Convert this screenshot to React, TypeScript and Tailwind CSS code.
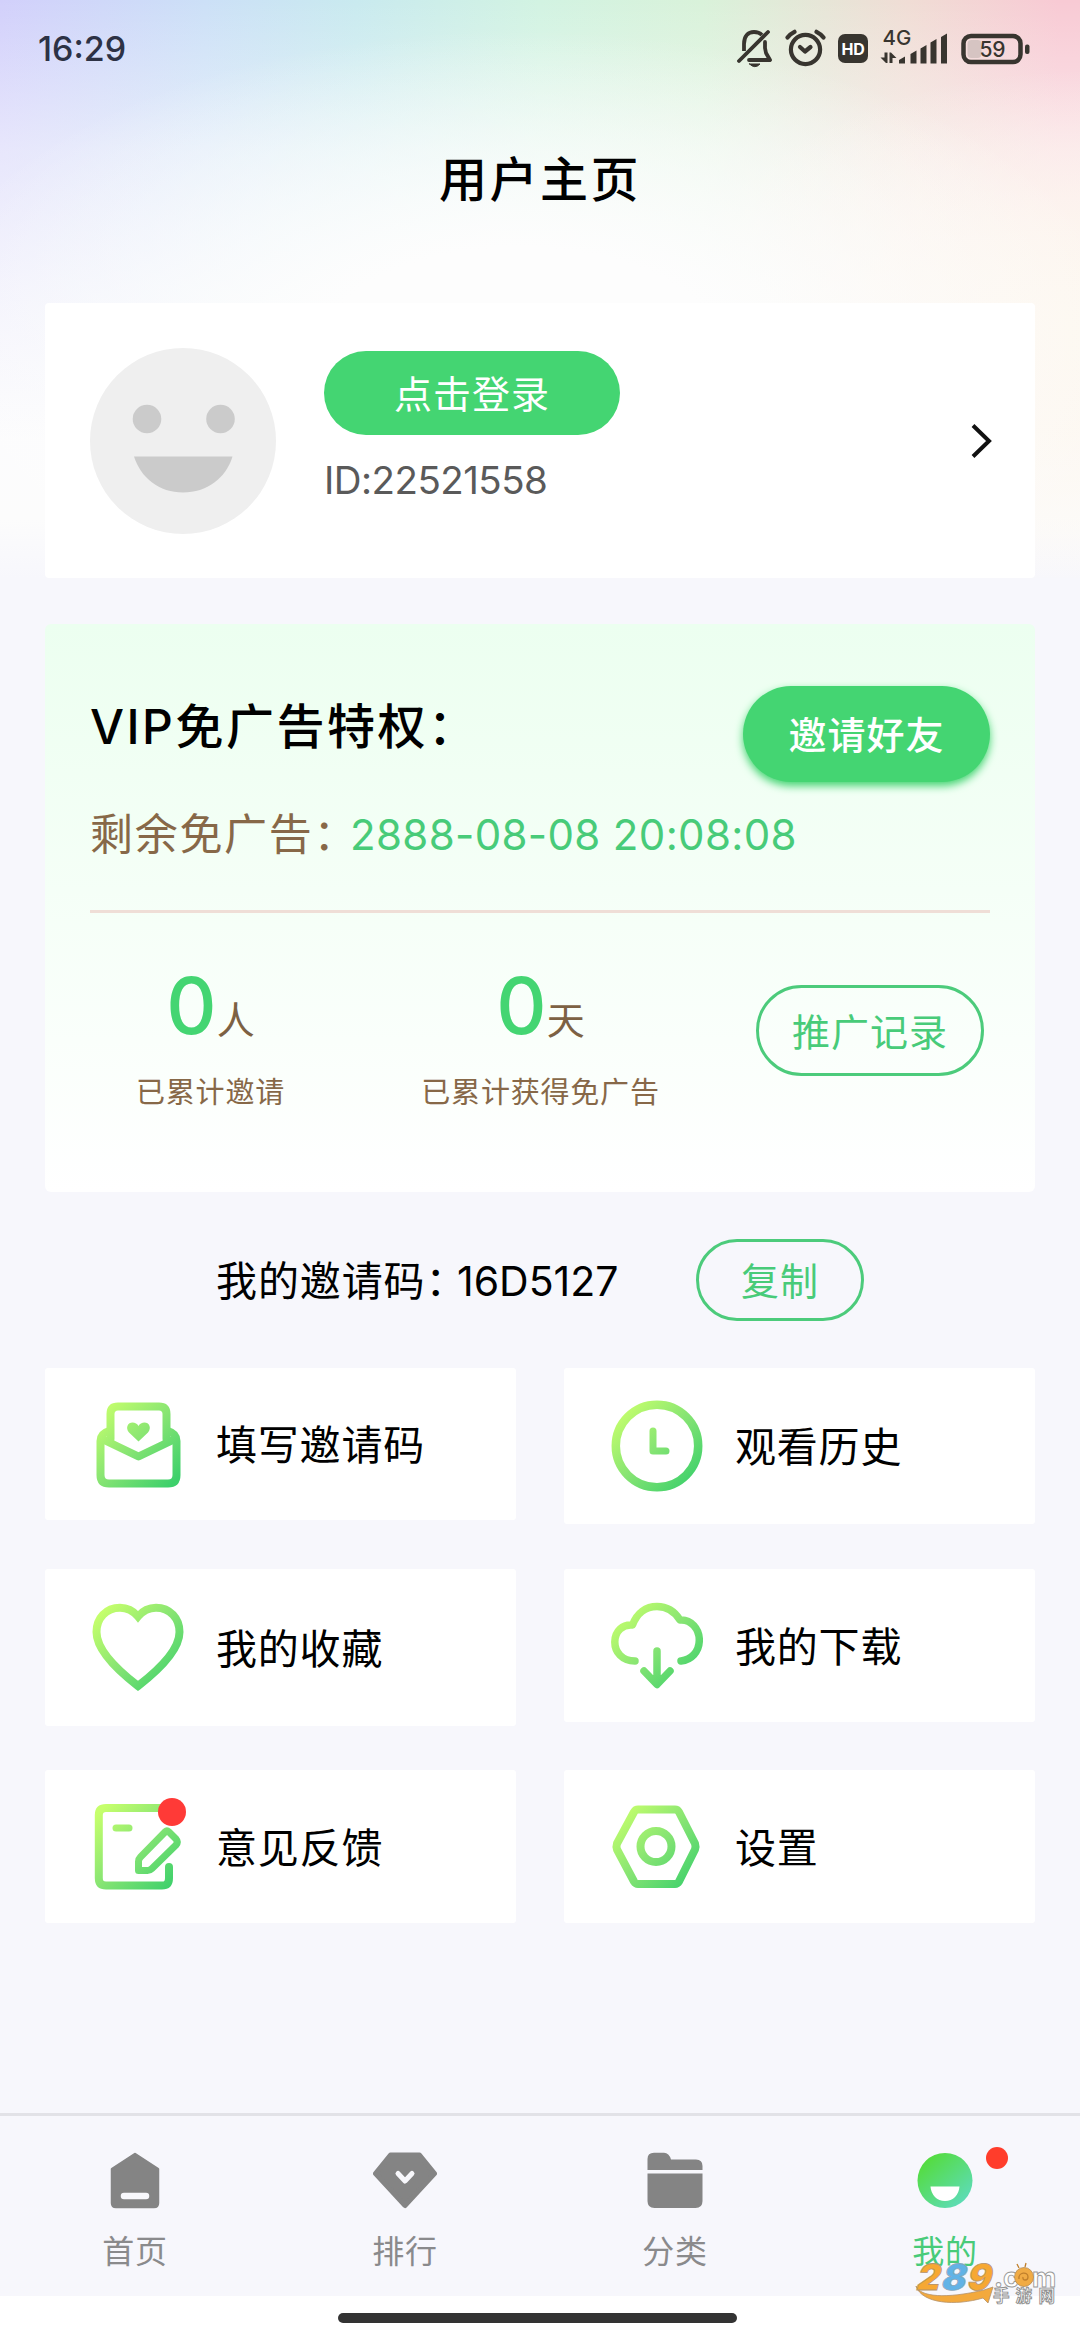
import React from "react";

const INK = "#38352f";

function StatusIcons() {
  return (
    <div className="flex h-[40px] items-start">
      <svg width="36" height="40" viewBox="0 0 36 40" fill="none" stroke={INK} strokeWidth="3.8" strokeLinecap="round">
        <path d="M2 32 L31 3" />
        <path d="M7 22 V15 C7 7 11 3 17 3 C20 3 23 4 25 6" strokeLinecap="butt" />
        <path d="M28 13 V19 L29 24 L33 31 H12" strokeLinejoin="round" />
        <path d="M12.5 35 H23 Q18 40.500 12.5 35 Z" fill={INK} stroke={INK} strokeWidth="1" />
      </svg>
      <svg className="ml-[12px]" width="42" height="40" viewBox="0 0 42 40" fill="none" stroke={INK} strokeWidth="4.2" strokeLinecap="round" strokeLinejoin="round">
        <circle cx="20.5" cy="20.5" r="14.6" />
        <path d="M15 18 L20 22.5 L25.5 18" />
        <path d="M2.5 8.5 Q5 5 9.5 2.8 M38.5 8.5 Q36 5 31.5 2.8" />
      </svg>
      <div className="mt-[5px] ml-[11px] flex h-[29px] w-[30px] items-center justify-center rounded-[7px] bg-[#38352f] text-[16px] leading-none font-bold tracking-[-0.300px] text-white">
        HD
      </div>
      <svg className="-mt-[10px] ml-[12px]" width="68" height="50" viewBox="0 -10 68 50" fill={INK}>
        <text x="2.5" y="15.500" fontSize="20.500" fontFamily="Inter" fontWeight="500">4G</text>
        <path d="M19 34.5 V31 L25 27.5 V34.5 Z M30.500 34.500 V25 L36.500 21.500 V34.500 Z M40.500 34.500 V19.500 L46.500 16 V34.500 Z M50.500 34.500 V13.500 L56.500 10 V34.500 Z M61 34.500 V8 L67 4.500 V34.500 Z" />
        <path d="M4.500 23.500 H7.500 V34 H6 L0.500 28.500 H4.500 Z M9.500 34 V23.500 H11 L16.500 29 H12.500 V34 Z" />
      </svg>
      <svg className="ml-[13px]" width="70" height="40" viewBox="0 0 70 40" fill="none">
        <rect x="2.500" y="7" width="57" height="26" rx="7.500" stroke={INK} strokeWidth="4.500" />
        <rect x="6.500" y="11" width="14" height="18" rx="4" fill="#d6c4c2" />
        <text x="31.500" y="27.800" fontSize="21" fontFamily="Inter" fontWeight="500" fill={INK} textAnchor="middle">59</text>
        <rect x="64" y="15.500" width="4.500" height="9.500" rx="2" fill={INK} />
      </svg>
    </div>
  );
}

function GradientIcon({ id, children }: { id: string; children: React.ReactNode }) {
  return (
    <svg width="92" height="92" viewBox="0 0 92 92" fill="none" stroke={`url(#${id})`} strokeWidth="8" strokeLinecap="round" strokeLinejoin="round" className="shrink-0">
      <defs>
        <linearGradient id={id} gradientUnits="userSpaceOnUse" x1="8" y1="10" x2="82" y2="84">
          <stop offset="0" stopColor="#c6ff6c" />
          <stop offset="0.500" stopColor="#86e473" />
          <stop offset="1" stopColor="#3dd06b" />
        </linearGradient>
      </defs>
      {children}
    </svg>
  );
}

const menu = [
  {
    label: "填写邀请码", height: "h-[152px]",
    icon: (
      <GradientIcon id="g-invite">
        <path d="M18.500 41 V16 Q18.500 8.500 26 8.500 H67 Q74.500 8.500 74.500 16 V41" />
        <path d="M17 33 Q8.500 35.500 8.500 43 V77 Q8.500 85.500 17 85.500 H76 Q84.500 85.500 84.500 77 V43 Q84.500 35.500 76 33" />
        <path d="M10 41 L46.500 58.500 L83 41" />
        <path d="M46.500 43.500 L37 34.500 C33 29.500 36 24.500 40.500 24.500 C43 24.500 45.500 26 46.500 28 C47.500 26 50 24.500 52.500 24.500 C57 24.500 60 29.500 56 34.500 Z" fill="url(#g-invite)" stroke="none" />
      </GradientIcon>
    ),
  },
  {
    label: "观看历史", height: "h-[156px]",
    icon: (
      <GradientIcon id="g-clock">
        <circle cx="46" cy="46" r="41.200" strokeWidth="8.500" />
        <path d="M42 31 V51 H55" strokeWidth="7" />
      </GradientIcon>
    ),
  },
  {
    label: "我的收藏", height: "h-[157px]",
    icon: (
      <GradientIcon id="g-heart">
        <path d="M46 14.500 C40 7.500 34 5.800 28 5.800 C14 5.800 4.500 16.500 4.500 30 C4.500 48 24 67 46 84 C68 67 87.500 48 87.500 30 C87.500 16.500 78 5.800 64 5.800 C58 5.800 52 7.500 46 14.500 Z" strokeLinejoin="miter" />
      </GradientIcon>
    ),
  },
  {
    label: "我的下载", height: "h-[153px]",
    icon: (
      <GradientIcon id="g-cloud">
        <path d="M24 61 C11 61 3.800 52 3.800 42 C3.800 31 12 24 21.500 25 C26 13 35 6.500 46 6.500 C56 6.500 64 12 69 20 C80 19 88.300 29 88.300 40 C88.300 52 80 60 70 61" strokeWidth="7.500" />
        <path d="M46 51 V84 M33 71 L46 84.500 L59 71" strokeWidth="7.500" />
      </GradientIcon>
    ),
  },
  {
    label: "意见反馈", height: "h-[153px]", dot: true,
    icon: (
      <GradientIcon id="g-note">
        <path d="M68 7 H14 Q6.800 7 6.800 14 V77 Q6.800 84.500 14 84.500 H70 Q77 84.500 77 77 V66" />
        <path d="M24 27 H37" strokeWidth="7" />
        <path d="M73.500 30.500 Q75 29 77 31 L84 38 Q86.500 41 84 44 L60 67.500 Q58 69.500 55.500 69.500 H46.500 V60.500 Q46.500 58 48.500 56 Z" strokeWidth="7" />
      </GradientIcon>
    ),
  },
  {
    label: "设置", height: "h-[153px]",
    icon: (
      <GradientIcon id="g-gear">
        <path d="M27 8.500 H64 Q66.500 8.500 68 11 L84 42.500 Q85 45.500 84 48.500 L68 80.500 Q66.500 83 64 83 H27 Q24.500 83 23 80.500 L6 48.500 Q5 45.500 6 42.500 L23 11 Q24.500 8.500 27 8.500 Z" />
        <circle cx="45" cy="45.500" r="15.500" />
      </GradientIcon>
    ),
  },
];

const tabs = [
  {
    label: "首页",
    icon: (
      <>
        <path d="M32 2 L55 17 V51 Q55 55 51 55 H13 Q9 55 9 51 V17 Z" fill="#848484" stroke="#848484" strokeWidth="2.500" strokeLinejoin="round" />
        <path d="M21 44 H43" stroke="#f8f8fc" strokeWidth="6.500" strokeLinecap="round" />
      </>
    ),
  },
  {
    label: "排行",
    icon: (
      <>
        <path d="M17.500 3 H46.500 L61.500 21.500 L32 53.500 L2.500 21.500 Z" fill="#848484" stroke="#848484" strokeWidth="5" strokeLinejoin="round" />
        <path d="M25 21.500 L32 29 L39 21.500" fill="none" stroke="#f8f8fc" strokeWidth="5" strokeLinecap="round" strokeLinejoin="round" />
      </>
    ),
  },
  {
    label: "分类",
    icon: (
      <>
        <path d="M4.500 18 V7 Q4.500 0.700 11 0.700 H21 Q26 0.700 28 7.500 H53 Q59.500 7.500 59.500 14 V18 Z" fill="#848484" />
        <path d="M4.500 21.500 H59.500 V49 Q59.500 56 52.500 56 H11.500 Q4.500 56 4.500 49 Z" fill="#848484" />
      </>
    ),
  },
  {
    label: "我的", active: true,
    icon: (
      <>
        <defs>
          <linearGradient id="g-me" x1="0.150" y1="0.100" x2="0.900" y2="0.950">
            <stop offset="0" stopColor="#54dc3c" />
            <stop offset="1" stopColor="#5edcc0" />
          </linearGradient>
        </defs>
        <circle cx="32" cy="28.500" r="27.500" fill="url(#g-me)" />
        <path d="M17.500 34.500 H46.500 C46 43 40 49 32 49 C24 49 18 43 17.500 34.500 Z" fill="#fff" />
      </>
    ),
  },
];

function Watermark() {
  return (
    <svg className="absolute top-[132px] left-[908px]" width="160" height="66" viewBox="-4 -14 160 66">
      <path d="M4 24 C8 35 34 37 72 28 L81 25 L76 41 L71 36 C44 44 10 42 4 24 Z" fill="#f3a93c" stroke="#b59269" strokeWidth="0.800" />
      <g fontFamily="Inter" fontWeight="900" fontSize="36" strokeWidth="0.800" transform="skewX(-14)">
        <text x="10" y="28" fill="#f6a833" stroke="#b59269">2</text>
        <text x="60.500" y="28" fill="#f6a833" stroke="#b59269">9</text>
        <text x="35" y="28" fill="#62b3e6" stroke="#8aa6b8">8</text>
      </g>
      <g fontFamily="Inter" fontWeight="700" fill="#fff" stroke="#9a9a9a" strokeWidth="0.900">
        <text x="82" y="24.500" fontSize="27">.c</text>
        <text x="120" y="24.500" fontSize="26.500">m</text>
      </g>
      <circle cx="112" cy="15" r="9.500" fill="#f0ab45" stroke="#b58d55" strokeWidth="0.800" />
      <path d="M107 17 C106 10 116 9 116 15 C116 19 110 19 111 15 M107 6 L105 2 M113 5 L114 1" fill="none" stroke="#c07f2c" strokeWidth="1.300" />
      <g fontFamily="Noto Sans CJK SC" fontWeight="700" fontSize="16.500" fill="#fff" stroke="#8f8f8f" strokeWidth="0.900">
        <text x="81" y="39.500">手</text>
        <text x="103.500" y="39.500">游</text>
        <text x="126.500" y="39.500">网</text>
      </g>
    </svg>
  );
}

export default function App() {
  return (
    <div className="flex h-[2340px] w-[1080px] flex-col overflow-hidden bg-[#f7f7fc] font-['Inter','Noto_Sans_CJK_SC',sans-serif] text-black">
      <div className="bg-[radial-gradient(ellipse_620px_320px_at_520px_350px,#fdfdfd_0%,#fdfdfd_32%,#fdfdfd00_100%),radial-gradient(ellipse_420px_260px_at_1080px_330px,#fdf8f0_0%,#fdf7efcc_40%,#fdf7ef00_100%),linear-gradient(to_bottom,#fdfdfd00_0px,#fdfdfd80_150px,#fdfdfdc0_290px,#fcfcfd_440px,#fcfcfc_520px,#f7f7fc_578px),linear-gradient(to_right,#d2d0fb_0%,#cce0f7_19%,#c9eaef_33%,#d2f3e2_50%,#d9f2da_65%,#f0ddd5_84%,#f8cad4_98%)]">
        <header className="flex h-[98px] items-center justify-between pr-[49px] pl-[38px]">
          <span className="text-[34px] leading-none font-medium text-[#2d3245]">16:29</span>
          <StatusIcons />
        </header>
        <h1 className="flex h-[164px] items-center justify-center text-[48px] font-medium tracking-[2.500px]">用户主页</h1>
        <section className="mx-[45px] mt-[41px] flex h-[275px] items-center rounded-[4px] bg-white pr-[38px] pl-[45px]">
          <svg width="186" height="186" viewBox="0 0 186 186">
            <circle cx="93" cy="93" r="93" fill="#efefef" />
            <circle cx="57" cy="71" r="14.300" fill="#cbcbcb" />
            <circle cx="130.500" cy="71" r="14.300" fill="#cbcbcb" />
            <path d="M44 108.500 H142.500 C136 130 117 144.500 93 144.500 C69 144.500 51 130 44 108.500 Z" fill="#cbcbcb" />
          </svg>
          <div className="ml-[48px] flex h-[179px] flex-1 flex-col items-start">
            <button className="h-[84px] w-[296px] rounded-full bg-[#44d572] pt-[2px] text-[38px] leading-none tracking-[1px] text-white">点击登录</button>
            <span className="mt-[23px] text-[38.500px] leading-[44px] tracking-[-0.550px] text-[#5a5a5a]">ID:22521558</span>
          </div>
          <svg width="30" height="40" viewBox="0 0 30 40" fill="none" stroke="#111" strokeWidth="4">
            <path d="M6 4.500 L22 20 L6 35.500" />
          </svg>
        </section>
      </div>

      <section className="mx-[45px] mt-[46px] flex h-[568px] shrink-0 flex-col rounded-[6px] bg-gradient-to-b from-[#ecfff0] to-white px-[45px]">
        <div className="flex items-start justify-between pt-[62px]">
          <h2 className="mt-[13px] text-[48px] leading-[56px] font-medium tracking-[2.500px] whitespace-nowrap">VIP免广告特权：</h2>
          <button className="h-[96px] w-[247px] rounded-full bg-[#44d572] pt-[2px] text-[38px] leading-none font-medium tracking-[1px] text-white shadow-[0_4px_9px_#44d572]">邀请好友</button>
        </div>
        <div className="mt-[22px] flex h-[60px] items-center whitespace-nowrap">
          <span className="w-[260px] text-[43px] tracking-[1.700px] text-[#876848]">剩余免广告：</span>
          <span className="text-[42px] tracking-[0.350px] text-[#48cb79]">2888-08-08 20:08:08</span>
        </div>
        <div className="mt-[46px] h-[3px] bg-[#efded7]" />
        <div className="flex">
          <div className="flex w-[241px] flex-col items-center">
            <div className="mt-[49px] flex h-[88px] items-baseline leading-[88px]">
              <span className="text-[78px] font-medium text-[#44d572]">0</span>
              <span className="text-[38px] text-[#7d6143]">人</span>
            </div>
            <span className="mt-[25px] text-[29px] leading-[36px] tracking-[0.800px] text-[#876848]">已累计邀请</span>
          </div>
          <div className="ml-[51px] flex w-[317px] flex-col items-center">
            <div className="mt-[49px] flex h-[88px] items-baseline leading-[88px]">
              <span className="text-[78px] font-medium text-[#44d572]">0</span>
              <span className="text-[38px] text-[#7d6143]">天</span>
            </div>
            <span className="mt-[25px] text-[29px] leading-[36px] tracking-[0.800px] whitespace-nowrap text-[#876848]">已累计获得免广告</span>
          </div>
          <button className="mt-[72px] ml-[57px] h-[91px] w-[228px] rounded-full border-[3px] border-[#4ccb7b] pt-[2px] text-[38px] leading-none tracking-[1px] text-[#48cb79]">推广记录</button>
        </div>
      </section>

      <div className="flex h-[176px] shrink-0 items-center pl-[216px]">
        <div className="flex w-[480px] items-center pt-[3px] whitespace-nowrap">
          <span className="w-[241px] text-[41px] tracking-[0.900px]">我的邀请码：</span>
          <span className="text-[41px]">16D5127</span>
        </div>
        <button className="h-[82px] w-[168px] rounded-full border-[3px] border-[#4ccb7b] pt-[2px] text-[38px] leading-none tracking-[1px] text-[#48cb79]">复制</button>
      </div>

      <div className="grid flex-1 auto-rows-[201px] grid-cols-[471px_471px] items-start gap-x-[48px] px-[45px]">
        {menu.map((m) => (
          <div key={m.label} className={`flex items-center rounded-[3px] bg-white pl-[47px] ${m.height}`}>
            <div className="relative">
              {m.icon}
              {m.dot && <span className="absolute -top-[3px] left-[66px] size-[28px] rounded-full bg-[#ff3a37]" />}
            </div>
            <span className="ml-[32px] pt-[4px] text-[41px] tracking-[0.800px] whitespace-nowrap">{m.label}</span>
          </div>
        ))}
      </div>

      <nav className="relative grid h-[183px] shrink-0 grid-cols-4 border-t-[3px] border-[#e2e2e7]">
        {tabs.map((t) => (
          <div key={t.label} className="flex flex-col items-center pt-[36px]">
            <div className="relative">
              <svg width="64" height="57" viewBox="0 0 64 57">{t.icon}</svg>
              {t.active && <span className="absolute -top-[5px] left-[73px] size-[22px] rounded-full bg-[#ff3d2b]" />}
            </div>
            <span className={`mt-[23px] text-[32px] leading-[40px] tracking-[0.800px] ${t.active ? "text-[#48cb79]" : "text-[#8a8a8c]"}`}>{t.label}</span>
          </div>
        ))}
        <Watermark />
      </nav>
      <div className="flex h-[44px] shrink-0 justify-center bg-white pt-[17px] pr-[6px]">
        <div className="h-[10px] w-[399px] rounded-full bg-[#333]" />
      </div>
    </div>
  );
}
